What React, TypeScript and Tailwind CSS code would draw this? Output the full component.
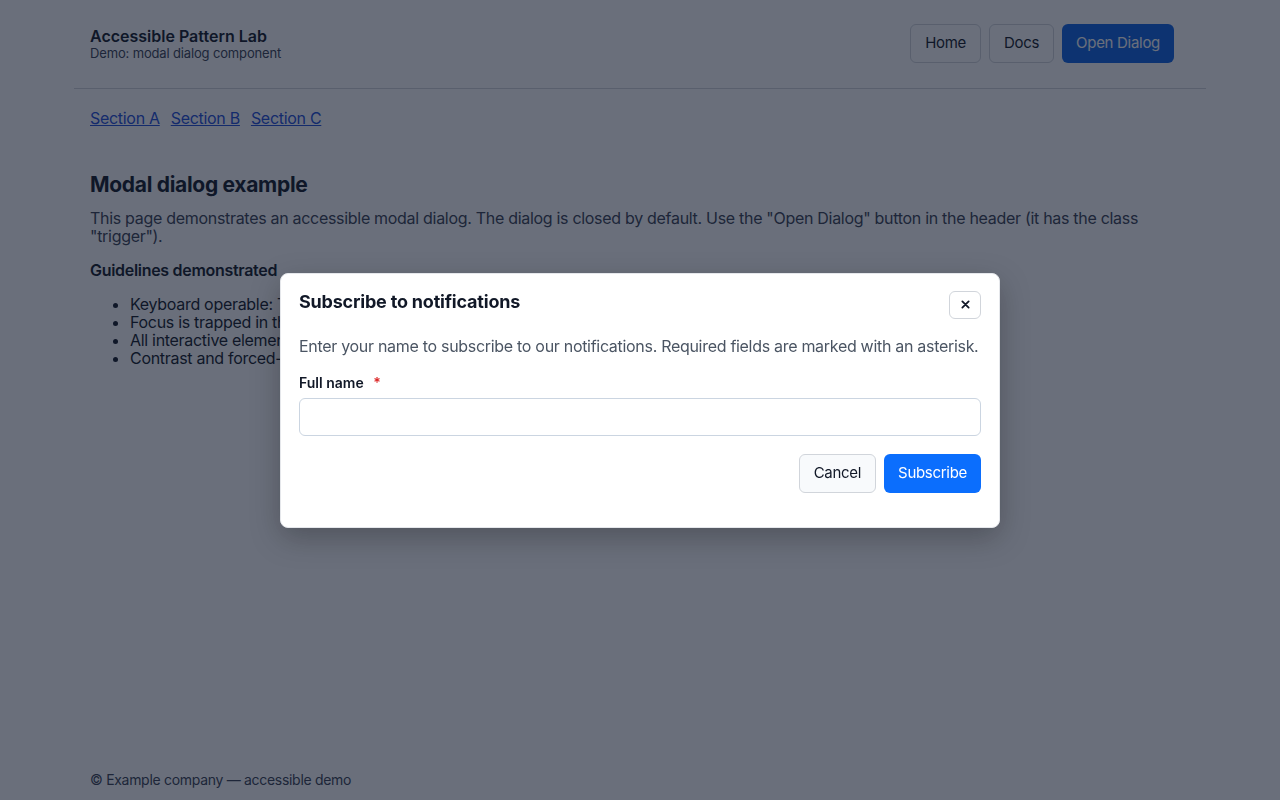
import { useState } from 'react';

const guidelines = [
    'Keyboard operable: Tab and Shift+Tab move between controls, Escape closes the dialog.',
    'Focus is trapped in the dialog while it is open and returns to the trigger on close.',
    'All interactive elements have accessible names and visible focus styles.',
    'Contrast and forced-colors modes are respected.',
];

export default function App() {
    const [open, setOpen] = useState(true);
    const [name, setName] = useState('');

    return (
        <div className="min-h-screen bg-white text-[#111827] font-['Inter',sans-serif] tracking-[-0.3px] flex flex-col">
            <div className="mx-auto w-full max-w-[1132px] flex-1 flex flex-col">
                <header className="flex items-center justify-between border-b border-[#d1d5db] pl-4 pr-8 h-[89px]">
                    <div className="flex flex-col">
                        <span className="text-[16px] font-semibold leading-[18px] tracking-normal">Accessible Pattern Lab</span>
                        <span className="text-[13px] text-[#374151] leading-[16px] tracking-[-0.15px]">Demo: modal dialog component</span>
                    </div>
                    <nav className="flex items-center gap-2 mb-[1px]">
                        <button className="h-[39px] px-[14px] rounded-md border border-[#d1d5db] text-[15px] text-[#111827]">Home</button>
                        <button className="h-[39px] px-[14px] rounded-md border border-[#d1d5db] text-[15px] text-[#111827]">Docs</button>
                        <button
                            onClick={() => setOpen(true)}
                            className="trigger h-[39px] px-[14px] rounded-md bg-[#0b63e5] text-[15px] text-white"
                        >
                            Open Dialog
                        </button>
                    </nav>
                </header>

                <main className="px-4 flex-1">
                    <div className="flex gap-[11px] mt-[17px] text-[16px] text-[#1d4ed8]">
                        <a href="#a" className="underline">Section A</a>
                        <a href="#b" className="underline">Section B</a>
                        <a href="#c" className="underline">Section C</a>
                    </div>

                    <h1 className="mt-[43px] text-[21px] font-bold leading-[24px]">Modal dialog example</h1>
                    <p className="mt-[12px] text-[16px] leading-[18px] text-[#374151]">
                        This page demonstrates an accessible modal dialog. The dialog is closed by default. Use the "Open Dialog" button in the header (it has the class "trigger").
                    </p>
                    <h2 className="mt-[16px] text-[16px] font-semibold leading-[18px]">Guidelines demonstrated</h2>
                    <ul className="mt-[16px] pl-10 list-disc text-[16px] leading-[18px]">
                        {guidelines.map((g) => (
                            <li key={g}>{g}</li>
                        ))}
                    </ul>
                </main>

                <footer className="px-4 pb-[10px] text-[14px] text-[#374151]">© Example company — accessible demo</footer>
            </div>

            {open && (
                <div className="fixed inset-0 bg-[rgba(15,23,42,0.62)] flex items-center justify-center">
                    <div
                        role="dialog"
                        aria-modal="true"
                        aria-labelledby="dlg-title"
                        className="w-[720px] bg-white rounded-lg border border-[#e5e7eb] shadow-[0_10px_30px_rgba(0,0,0,0.25)] px-[18px] pt-[17px] pb-[34px]"
                    >
                        <div className="flex items-start justify-between">
                            <h2 id="dlg-title" className="text-[18px] font-bold leading-[22px] mt-0 tracking-[-0.2px]">Subscribe to notifications</h2>
                            <button
                                aria-label="Close"
                                onClick={() => setOpen(false)}
                                className="w-[32px] h-[28px] rounded-md border border-[#d1d5db] flex items-center justify-center text-[#111827]"
                            >
                                <svg width="9" height="9" viewBox="0 0 10 10" stroke="currentColor" strokeWidth="2" strokeLinecap="round">
                                    <path d="M1.5 1.5l7 7M8.5 1.5l-7 7" />
                                </svg>
                            </button>
                        </div>
                        <p className="mt-[17px] text-[16px] leading-[20px] text-[#4b5563]">
                            Enter your name to subscribe to our notifications. Required fields are marked with an asterisk.
                        </p>
                        <label htmlFor="fullname" className="block mt-[18px] text-[14px] font-semibold leading-[18px] tracking-normal">
                            Full name <span className="text-[#dc2626] ml-[6px]">*</span>
                        </label>
                        <input
                            id="fullname"
                            value={name}
                            onChange={(e) => setName(e.target.value)}
                            className="mt-[6px] block w-full h-[38px] rounded-md border border-[#cbd5e1] px-3 text-[16px] outline-none"
                        />
                        <div className="mt-[18px] flex justify-end gap-2">
                            <button
                                onClick={() => setOpen(false)}
                                className="h-[39px] px-[14px] rounded-md border border-[#d1d5db] bg-[#f8fafc] text-[15px] text-[#111827]"
                            >
                                Cancel
                            </button>
                            <button className="h-[39px] px-[14px] rounded-md bg-[#0b6efd] text-[15px] text-white">Subscribe</button>
                        </div>
                    </div>
                </div>
            )}
        </div>
    );
}
